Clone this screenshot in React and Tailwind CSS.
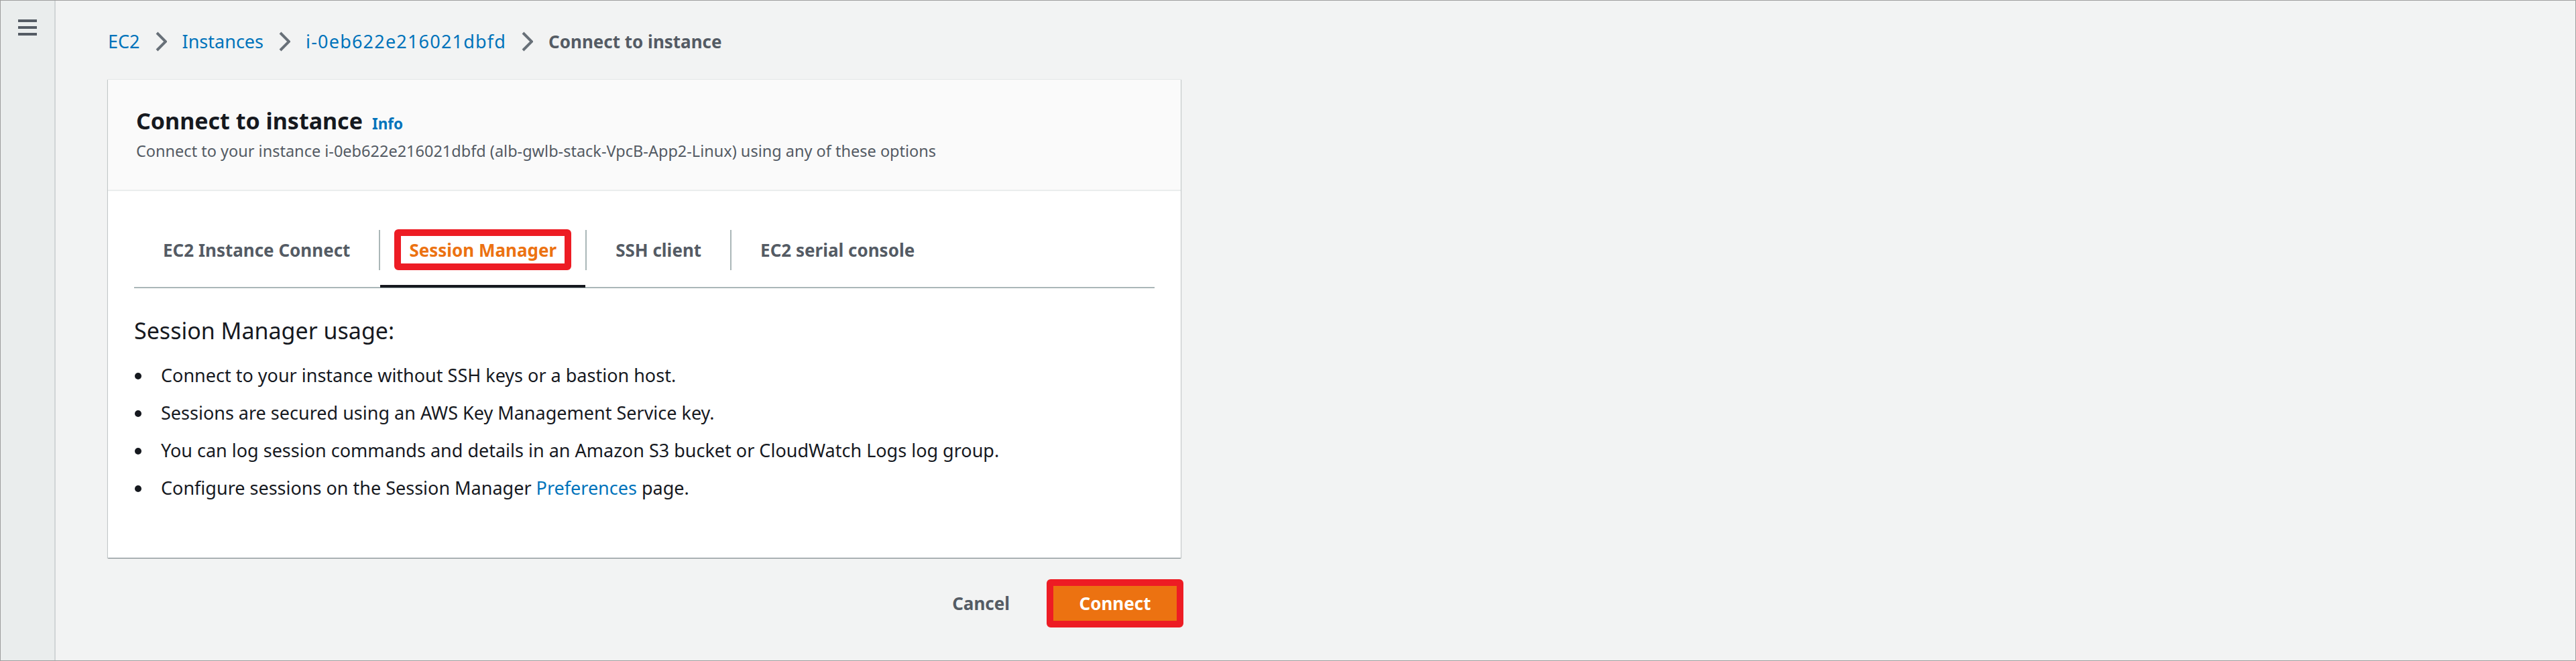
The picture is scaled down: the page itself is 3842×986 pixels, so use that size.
import { useState } from 'react';

const crumbs = [
  { label: 'EC2', cls: '' },
  { label: 'Instances', cls: '' },
  { label: 'i-0eb622e216021dbfd', cls: 'tracking-[1.2px]' },
];
const tabs = ['EC2 Instance Connect', 'Session Manager', 'SSH client', 'EC2 serial console'];

function Chevron() {
  return (
    <svg width="17" height="30" viewBox="0 0 17 30" className="shrink-0">
      <polyline points="2,2 15,15 2,28" fill="none" stroke="#687078" strokeWidth="4" />
    </svg>
  );
}

export default function App() {
  const [activeTab, setActiveTab] = useState('Session Manager');

  return (
    <div className="w-[3842px] h-[986px] flex border border-[#9e9e9e] bg-[#f2f3f3] font-['Noto_Sans',sans-serif] overflow-hidden">
      {/* side nav */}
      <div className="w-[82px] shrink-0 bg-[#eaeded] border-r-2 border-[#d1d5d6] pl-[26px] pt-[28px]">
        <svg width="28" height="24" viewBox="0 0 28 24">
          <rect x="0" y="0" width="28" height="4" fill="#545b64" />
          <rect x="0" y="10" width="28" height="4" fill="#545b64" />
          <rect x="0" y="20" width="28" height="4" fill="#545b64" />
        </svg>
      </div>

      <div className="flex-1 pl-[78px] pt-[43px]">
        {/* breadcrumbs */}
        <div className="flex items-center gap-[23px] h-[36px] leading-[36px]">
          {crumbs.map((c) => (
            <div key={c.label} className="flex items-center gap-[23px]">
              <span className={`text-[27px] text-[#0073bb] ${c.cls}`}>{c.label}</span>
              <Chevron />
            </div>
          ))}
          <span className="text-[26px] font-bold text-[#545b64]">Connect to instance</span>
        </div>

        {/* card */}
        <div className="mt-[38px] w-[1600px] bg-white border-t border-[#e5e7e7] shadow-[0_1px_1px_0_rgba(0,28,36,0.3),1px_1px_1px_0_rgba(0,28,36,0.15),-1px_1px_1px_0_rgba(0,28,36,0.15)]">
          <div className="bg-[#fafafa] pt-[39px] px-[42px] pb-[43px] border-b-2 border-[#eaeded]">
            <div className="flex items-baseline gap-[14px]">
              <h2 className="text-[34px] leading-[44px] font-bold text-[#16191f]">Connect to instance</h2>
              <span className="text-[22.5px] font-bold text-[#0073bb]">Info</span>
            </div>
            <p className="mt-[8px] text-[23.5px] leading-[30px] text-[#545b64]">
              Connect to your instance i-0eb622e216021dbfd (alb-gwlb-stack-VpcB-App2-Linux) using any of these options
            </p>
          </div>

          <div className="px-[39px] pb-[76px]">
            {/* tabs */}
            <div className="flex border-b-2 border-[#aab7b8]">
              {tabs.map((t, i) => {
                const active = t === activeTab;
                return (
                  <div key={t} className="relative pt-[58px] pb-[25px] cursor-pointer" onClick={() => setActiveTab(t)}>
                    <div className={`h-[60px] flex items-center px-[43px] ${i > 0 ? 'border-l-2 border-[#aab7b8]' : ''}`}>
                      <span className={`relative text-[26px] leading-[36px] font-bold ${active ? 'text-[#ec7211]' : 'text-[#545b64]'}`}>
                        {t}
                        {active && (
                          <span className="absolute -top-[13px] -bottom-[12px] -left-[22px] -right-[22px] border-[10px] border-[#ed1c24] rounded-[6px]" />
                        )}
                      </span>
                    </div>
                    {active && <div className="absolute left-[2px] right-0 bottom-[-1px] h-[4px] bg-[#16191f]" />}
                  </div>
                );
              })}
            </div>

            <h3 className="mt-[41px] text-[34px] leading-[44px] text-[#16191f]">Session Manager usage:</h3>
            <ul className="mt-[17px] text-[27px] leading-[56px] text-[#16191f]">
              <li className="flex items-center h-[56px]">
                <span className="w-[10px] h-[10px] rounded-full bg-[#16191f] ml-[1px] mr-[29px] mt-[2px]" />
                Connect to your instance without SSH keys or a bastion host.
              </li>
              <li className="flex items-center h-[56px]">
                <span className="w-[10px] h-[10px] rounded-full bg-[#16191f] ml-[1px] mr-[29px] mt-[2px]" />
                Sessions are secured using an AWS Key Management Service key.
              </li>
              <li className="flex items-center h-[56px]">
                <span className="w-[10px] h-[10px] rounded-full bg-[#16191f] ml-[1px] mr-[29px] mt-[2px]" />
                You can log session commands and details in an Amazon S3 bucket or CloudWatch Logs log group.
              </li>
              <li className="flex items-center h-[56px]">
                <span className="w-[10px] h-[10px] rounded-full bg-[#16191f] ml-[1px] mr-[29px] mt-[2px]" />
                <span>
                  Configure sessions on the Session Manager <span className="text-[#0073bb]">Preferences</span> page.
                </span>
              </li>
            </ul>
          </div>
        </div>

        {/* actions */}
        <div className="mt-[32px] w-[1604px] flex justify-end items-center">
          <button className="mr-[55px] text-[26px] leading-[36px] font-bold text-[#545b64]">Cancel</button>
          <div className="border-[10px] border-[#ed1c24] rounded-[6px]">
            <button className="w-[184px] h-[52px] flex items-center justify-center bg-[#ec7211] text-white text-[26px] font-bold">
              Connect
            </button>
          </div>
        </div>
      </div>
    </div>
  );
}
